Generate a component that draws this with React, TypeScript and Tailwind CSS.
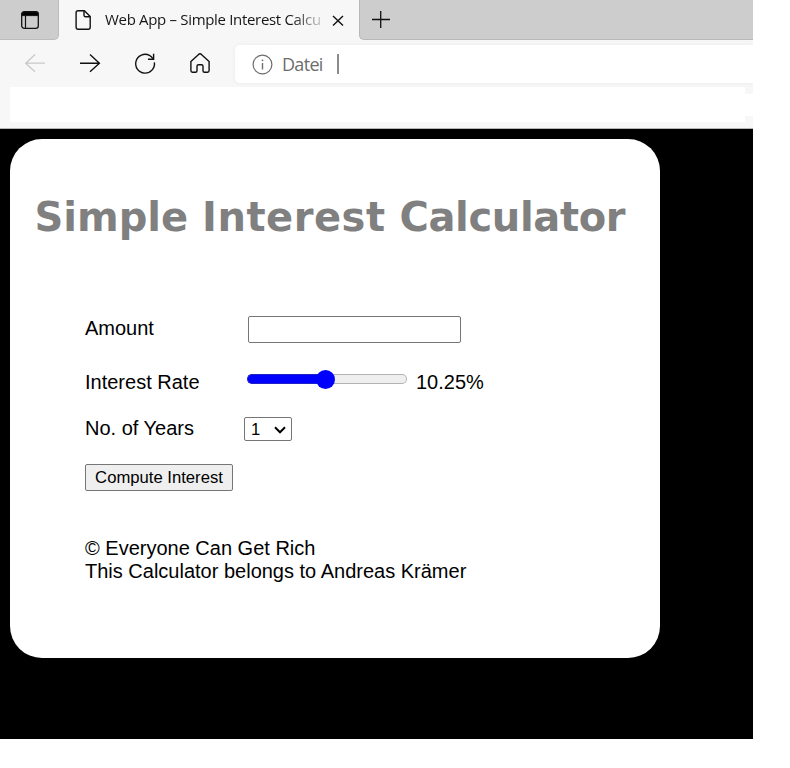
import React from "react";

function TabStrip() {
  return (
    <div className="flex h-10 bg-[#f7f7f7]">
      <div className="h-10 w-[59px] shrink-0">
        <div className="flex h-10 items-start rounded-br-[5px] border-r border-b border-[#bcbcbc] bg-[#cdcdcd] pt-[11px] pl-[21px]">
          <svg width="19" height="19" viewBox="0 0 19 19" fill="none" stroke="#111">
            <rect x="0.7" y="0.7" width="16.6" height="16.6" rx="2.6" strokeWidth="1.3" />
            <path d="M1 2.5Q1 1 2.5 1H15.5Q17 1 17 2.5V4.6H1Z" fill="#000" />
            <path d="M4.5 5V17" strokeWidth="1.2" />
          </svg>
        </div>
      </div>
      <div className="flex h-10 w-[300px] shrink-0 items-start bg-[#f7f7f7]">
        <svg className="mt-[9px] ml-4 shrink-0" width="18" height="22" viewBox="0 0 18 22" fill="none" stroke="#111" strokeWidth="1.4" strokeLinejoin="round">
          <path d="M3 1.7H9.4L15.2 7.5V18.3Q15.2 20.2 13.3 20.2H3Q1.1 20.2 1.1 18.3V3.6Q1.1 1.7 3 1.7Z" />
          <path d="M9 1.8V6.3Q9 7.7 10.4 7.7H15" />
        </svg>
        <div className="mt-[8px] ml-[12px] w-[217px] overflow-hidden bg-[linear-gradient(90deg,#151515_86%,#f7f7f7_103%)] bg-clip-text font-['Open_Sans',sans-serif] text-[15px] leading-[22px] tracking-[-0.32px] whitespace-nowrap text-transparent">
          Web App – Simple Interest Calcu
        </div>
        <svg className="mt-[15px] ml-[10px] shrink-0" width="12" height="12" viewBox="0 0 12 12" stroke="#111" strokeWidth="1.4">
          <path d="M1 1L11 10.5M11 1L1 10.5" />
        </svg>
      </div>
      <div className="flex grow items-start rounded-bl-[5px] border-b border-l border-[#b8b8b8] bg-[#cdcdcd]">
        <svg className="mt-[11px] ml-[12px]" width="18" height="18" viewBox="0 0 18 18" stroke="#111" strokeWidth="1.3">
          <path d="M0 8.5H18M8.7 0V17" />
        </svg>
      </div>
    </div>
  );
}

function Toolbar() {
  return (
    <div className="flex h-[47px] items-start overflow-hidden bg-[#f7f7f7]">
      <div className="flex w-[235px] shrink-0 pt-[11px] pl-6">
        <svg width="22" height="24" viewBox="0 0 22 24" fill="none" stroke="#c9c9c9" strokeWidth="1.3">
          <path d="M21 12.2H1.5M11 3.6L1.7 12.2L11 20.8" />
        </svg>
        <svg className="ml-[33px]" width="22" height="24" viewBox="0 0 22 24" fill="none" stroke="#111" strokeWidth="1.4">
          <path d="M1 12.2H20.5M11 3.6L20.4 12.2L11 20.8" />
        </svg>
        <svg className="ml-[33px]" width="22" height="24" viewBox="0 0 22 24" fill="none" stroke="#111" strokeWidth="1.4">
          <path d="M20.4 11.4A9.4 9.4 0 1 1 15.5 4.4Q17.4 5.4 19 7.6" />
          <path d="M19.6 2.8V8.2H14" />
        </svg>
        <svg className="ml-[33px]" width="22" height="24" viewBox="0 0 22 24" fill="none" stroke="#111" strokeWidth="1.4" strokeLinejoin="round">
          <path d="M1.9 10.6L9.6 3.4Q11 2.2 12.4 3.4L20.1 10.6V19.6Q20.1 21.2 18.6 21.2H15.5Q14 21.2 14 19.7V15.2Q14 13.7 12.5 13.7H9.5Q8 13.7 8 15.2V19.7Q8 21.2 6.5 21.2H3.4Q1.9 21.2 1.9 19.6Z" />
        </svg>
      </div>
      <div className="mt-[5px] flex h-[38px] grow items-center rounded-l-[5px] bg-white pl-[17px] text-[#6d6d6d] shadow-[0_0_4px_#e9e9e9]">
        <svg width="21" height="21" viewBox="0 0 21 21" fill="none" stroke="#6d6d6d" strokeWidth="1.2">
          <circle cx="10.5" cy="10.5" r="9.4" />
          <path d="M10.5 9V15.5" strokeWidth="1.4" />
          <circle cx="10.5" cy="6.3" r="0.9" fill="#6d6d6d" stroke="none" />
        </svg>
        <span className="ml-[9px] w-[55px] font-['Open_Sans',sans-serif] text-[18px] leading-6 tracking-[-0.7px]">Datei</span>
        <span className="h-5 w-[2px] bg-[#8b8b8b]" />
      </div>
    </div>
  );
}

function Calculator() {
  return (
    <div className="h-[519px] w-[650px] rounded-[32px] bg-white font-['Liberation_Sans',Arial,sans-serif] text-[20px] leading-[23px] text-black">
      <h1 className="pt-[54px] pl-[24.5px] font-['DejaVu_Sans',Verdana,sans-serif] text-[40px] leading-[49px] font-bold whitespace-nowrap text-[#808080]">
        Simple <span className="tracking-[0.5px]">Interest</span> <span className="tracking-[-0.35px]">Calculator</span>
      </h1>
      <div className="flex flex-col items-start pt-[75px] pl-[75px]">
        <div className="flex h-[54px] items-start">
          <label htmlFor="amount" className="w-[163px]">Amount</label>
          <input id="amount" className="-mt-px h-[27px] w-[213px] rounded-[2px] border border-[#767676] bg-white" />
        </div>
        <div className="flex h-[46px] items-start">
          <span className="w-[162px]">Interest Rate</span>
          <div className="-mt-0.5 flex h-5 w-[160px] items-center">
            <div className="-mr-1 h-[10px] w-[72.5px] rounded-l-full border border-r-0 border-[#2020c8] bg-[#0000ff]" />
            <div className="z-10 h-[19px] w-[19px] shrink-0 rounded-full bg-[#0000ff]" />
            <div className="-ml-1 h-[10px] grow rounded-r-full border border-l-0 border-[#b2b2b2] bg-[#efefef]" />
          </div>
          <span className="ml-[9px]">10.25%</span>
        </div>
        <div className="flex h-[48px] items-start">
          <span className="w-[159px]">No. of Years</span>
          <div className="flex h-6 w-[48px] items-center rounded-[2px] border border-[#767676] pl-[6px] text-[16.67px]">
            <span className="w-[23px]">1</span>
            <svg className="mt-px" width="12" height="8" viewBox="0 0 12 8" fill="none" stroke="#000" strokeWidth="2">
              <path d="M1 1.3L6 6.3L11 1.3" />
            </svg>
          </div>
        </div>
        <button className="-mt-px flex h-[27px] w-[148px] items-center justify-center rounded-[2px] border border-[#767676] bg-[#efefef] pb-px text-[16.67px] leading-[19px] whitespace-nowrap">
          Compute Interest
        </button>
        <p className="mt-[46px]">
          © Everyone Can Get Rich
          <br />
          This Calculator belongs to Andreas Krämer
        </p>
      </div>
    </div>
  );
}

export default function App() {
  return (
    <div className="h-[768px] w-[790px] overflow-hidden bg-white">
      <div className="w-[753px]">
        <TabStrip />
        <Toolbar />
        <div className="flex h-[42px] items-start border-b border-[#b5b5b5] bg-[#f7f7f7] pl-[10px]">
          <div className="h-[35px] w-[735px] bg-white" />
          <div className="mt-[7px] h-[22px] w-2 bg-white" />
        </div>
        <main className="h-[610px] bg-black pt-[10px] pl-[10px]">
          <Calculator />
        </main>
      </div>
    </div>
  );
}
